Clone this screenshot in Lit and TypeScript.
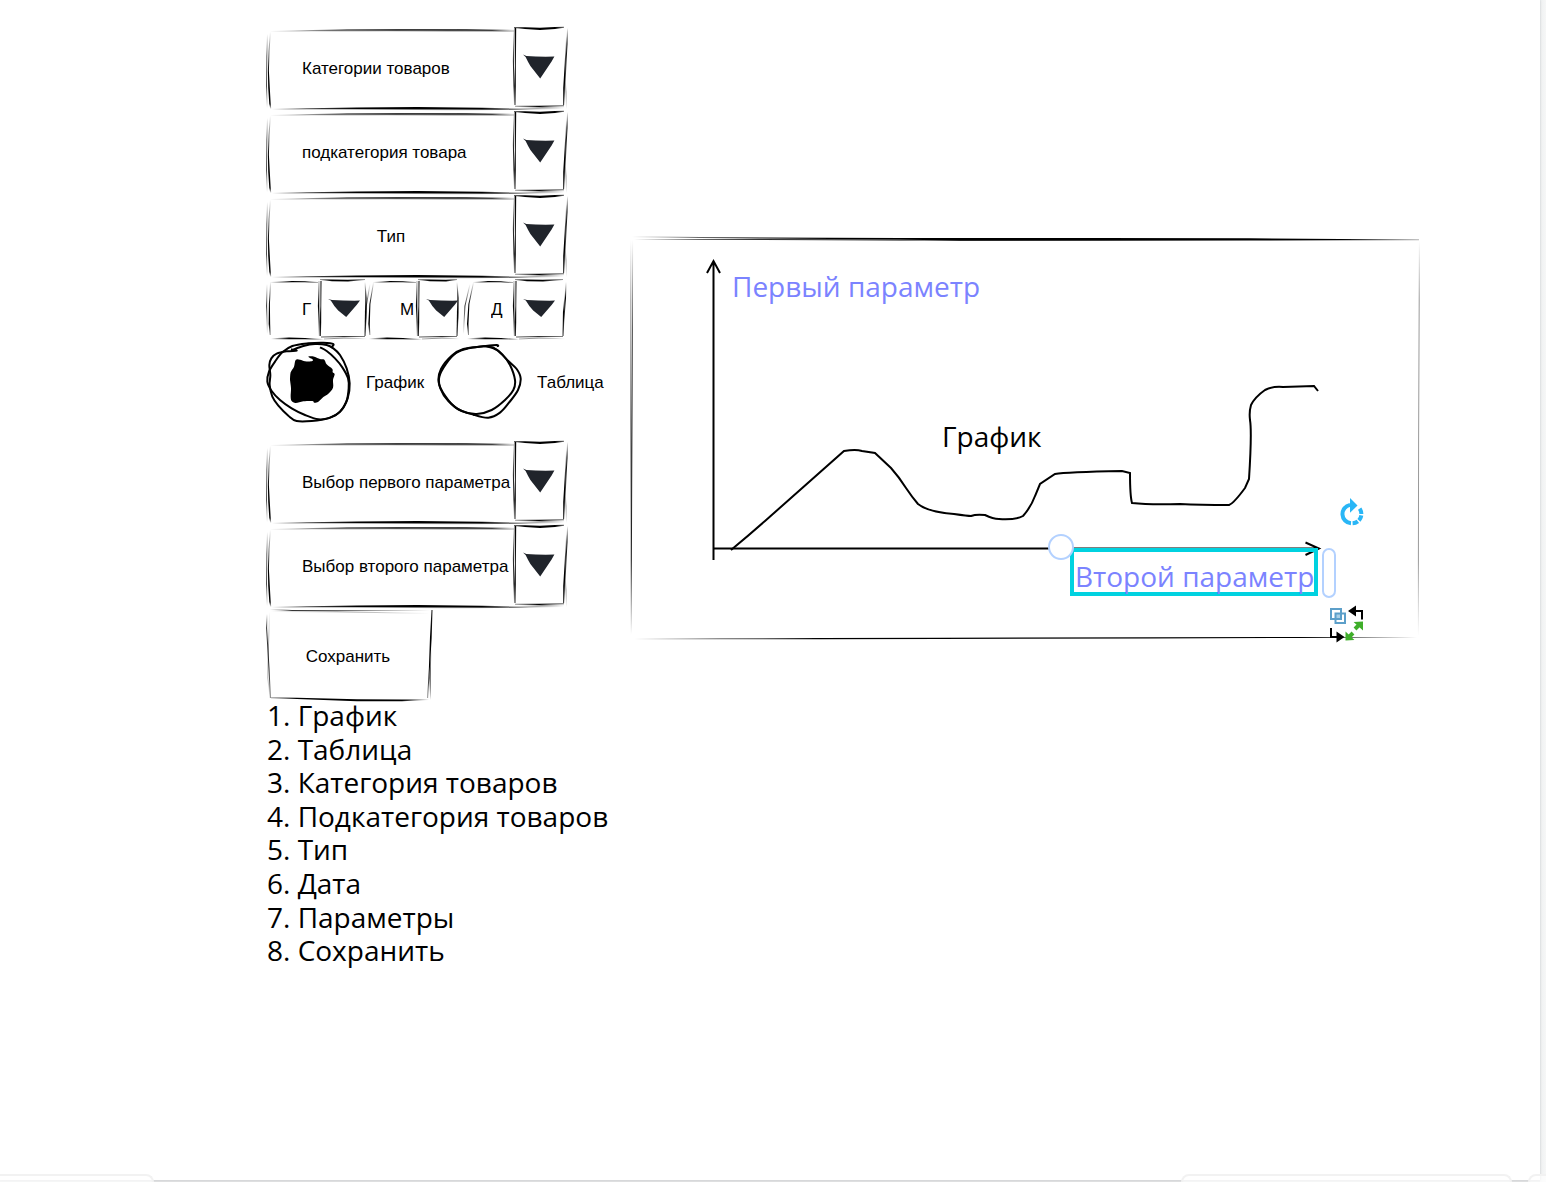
import { LitElement, html, css, svg, nothing } from "lit";
import { customElement, property } from "lit/decorators.js";

type Pt = [x: number, y: number, w: number];

let inkCount = 0;

/**
 * A pen stroke through the points. The third number of each point is the pen
 * pressure: above 1 the stroke gets thicker, below 1 it fades out.
 */
const pen = (...pts: Pt[]) => {
  const a: string[] = [];
  const b: string[] = [];
  pts.forEach(([x, y, pressure], i) => {
    const w = Math.max(pressure, 1);
    const p = pts[Math.max(0, i - 1)];
    const n = pts[Math.min(pts.length - 1, i + 1)];
    const dx = n[0] - p[0];
    const dy = n[1] - p[1];
    const len = Math.hypot(dx, dy) || 1;
    const ox = (-dy / len) * (w / 2);
    const oy = (dx / len) * (w / 2);
    a.push(`${(x + ox).toFixed(2)},${(y + oy).toFixed(2)}`);
    b.unshift(`${(x - ox).toFixed(2)},${(y - oy).toFixed(2)}`);
  });
  const [x1, y1] = pts[0];
  const [x2, y2] = pts[pts.length - 1];
  const span = (x2 - x1) ** 2 + (y2 - y1) ** 2;
  const id = `ink-${inkCount++}`;
  const stops = pts.map(([x, y, pressure]) => {
    const t = ((x - x1) * (x2 - x1) + (y - y1) * (y2 - y1)) / span;
    const alpha = pressure <= 0.2 ? 0 : Math.min(1, pressure);
    return svg`<stop offset=${t.toFixed(3)} stop-opacity=${alpha} />`;
  });
  return svg`
    <linearGradient id=${id} gradientUnits="userSpaceOnUse" x1=${x1} y1=${y1} x2=${x2} y2=${y2}>${stops}</linearGradient>
    <polygon fill=${`url(#${id})`} points=${a.concat(b).join(" ")} />`;
};

/** Path data of a smooth curve through a flat list of x, y coordinates. */
const smooth = (...c: number[]) => {
  const count = c.length / 2;
  const at = (i: number) => {
    const k = Math.min(count - 1, Math.max(0, i)) * 2;
    return [c[k], c[k + 1]];
  };
  let d = `M${c[0]} ${c[1]}`;
  for (let i = 0; i < count - 1; i++) {
    const [p0, p1, p2, p3] = [at(i - 1), at(i), at(i + 1), at(i + 2)];
    const c1 = [p1[0] + (p2[0] - p0[0]) / 6, p1[1] + (p2[1] - p0[1]) / 6];
    const c2 = [p2[0] - (p3[0] - p1[0]) / 6, p2[1] - (p3[1] - p1[1]) / 6];
    d += `C${[...c1, ...c2, ...p2].map((v) => v.toFixed(1)).join(" ")}`;
  }
  return d;
};

const largeFrame = () => svg`
  ${pen([3, 5.4, 0.1], [45, 4.6, 0.4], [80, 4, 1.2], [130, 3.8, 1.3], [200, 3.6, 0.7], [247, 3.6, 0.1])}
  ${pen([20, 5.4, 0.1], [120, 4.8, 0.4], [180, 4.8, 0.9], [225, 4.8, 1], [247, 5, 0.3])}
  ${pen([0.5, 8, 0.1], [-0.2, 30, 0.6], [-0.5, 60, 0.7], [0.2, 82, 0.1])}
  ${pen([3.4, 6, 0.1], [2, 25, 0.5], [1.4, 45, 1], [2, 62, 1.6], [3, 78, 1.4], [3.8, 83, 0.2])}
  ${pen([5, 83.2, 0.1], [40, 82.8, 0.7], [90, 82.4, 1.8], [150, 82.2, 2.4], [215, 82.6, 1.7], [262, 83.2, 0.1])}
  ${pen([150, 84, 0.1], [230, 83.6, 0.5], [270, 82.8, 0.4], [297, 82.4, 0.1])}
  ${pen([246.8, 2, 0.2], [246.4, 35, 0.9], [246.8, 60, 0.7], [247.4, 79, 0.1])}
  ${pen([248.4, 2, 1.6], [248.4, 40, 0.9], [248, 60, 1.6], [248, 79, 0.8])}
  ${pen([247, 1.6, 0.6], [258, 2.2, 1.8], [273, 2.8, 2.2], [288, 2, 1.9], [297, 1.2, 0.6])}
  ${pen([300.6, 2, 0.1], [300, 18, 1], [298.6, 45, 0.7], [297, 78, 0.2])}
  ${pen([299.6, 10, 0.2], [298, 42, 1.1], [297, 62, 1.6], [296.6, 79, 0.8])}
  ${pen([298, 50, 0.2], [299, 66, 0.4], [299.6, 83, 0.1])}
  ${pen([248, 80.2, 0.4], [272, 80.4, 1.3], [297, 79.8, 0.6])}
  ${pen([252, 82, 0.2], [275, 81.4, 0.4], [298, 81.4, 0.1])}
  <path class="mark" d="M256 28.6 l3.4 1.4 Q272 31 287.4 30.6 L284.6 35.4 L273.2 52.4 L263.4 40 Q261 36 258.6 31Z" />`;

const smallFrame = (mid: number, end: number, slant: number, lean: number) => svg`
  ${pen([slant + 3, 4.4, 0.1], [25, 3.6, 1.3], [38, 3.8, 1], [mid - 2, 4.6, 0.3])}
  ${pen([slant, 6, 0.1], [slant / 3 - 0.4, 28, 0.8], [0.4, 56, 0.1])}
  ${pen([slant + 3.6, 4, 0.1], [slant / 2 + 2.4, 26, 1], [slant / 3 + 2.4, 46, 1.5], [slant / 3 + 3.2, 57, 0.4])}
  ${pen([4, 60.8, 0.1], [22, 60.4, 1.6], [38, 60.6, 1.4], [mid + 4, 61.4, 0.1])}
  ${pen([mid - 1, 3, 0.3], [mid - 1.4, 28, 1.4], [mid - 0.6, 58, 0.4])}
  ${pen([mid + 1, 3, 1], [mid + 0.8, 28, 0.8], [mid + 0.4, 44, 1.6], [mid + 0.4, 58, 0.8])}
  ${pen([mid, 1.6, 0.4], [mid + 12, 2.4, 1.7], [mid + 28, 2.6, 1.9], [end - 2, 1.4, 0.4])}
  ${pen([end + lean, 4, 0.1], [end + lean / 2, 20, 1], [end - 1, 40, 0.7], [end - 2, 57, 0.2])}
  ${pen([end + lean / 2, 12, 0.1], [end - 1.4, 34, 1.3], [end - 2, 58, 0.8])}
  ${pen([mid + 1, 59, 0.6], [mid + 24, 58.4, 0.8], [end - 2, 58.6, 0.5])}
  ${pen([mid + 4, 61, 0.3], [mid + 24, 60, 0.5], [end, 60.8, 0.1])}
  <path class="mark" d=${`M${mid + 8} 21 l4 1 q14 .8 28 .6 l-3.4 4.4 l-10.4 12 l-8 -6.6 q-4 -4 -7.4 -10z`} />`;

@customElement("sketch-select")
export class SketchSelect extends LitElement {
  @property() label = "";
  @property({ type: Boolean }) centered = false;

  static styles = css`
    :host {
      display: block;
    }
    .field {
      position: relative;
      display: flex;
      height: 84px;
    }
    .frame {
      position: absolute;
      inset: 0;
      width: 100%;
      height: 100%;
      overflow: visible;
      pointer-events: none;
    }
    .mark {
      fill: #20242b;
    }
    .select {
      appearance: none;
      flex: 1;
      min-width: 0;
      margin: 0;
      border: 0;
      padding: 2px 52px 0 35px;
      background: none;
      color: #000;
      font: 17px/20px "Liberation Sans", Arial, sans-serif;
    }
    .centered {
      padding-left: 0;
      text-align: center;
      text-align-last: center;
    }
  `;

  render() {
    return html`<div class="field">
      <select class="select ${this.centered ? "centered" : ""}" aria-label=${this.label}>
        <option>${this.label}</option>
      </select>
      <svg class="frame" viewBox="0 0 300 84" preserveAspectRatio="none" aria-hidden="true">${largeFrame()}</svg>
    </div>`;
  }
}

const dateFrames: Record<string, unknown> = {
  Год: smallFrame(53, 100, 0, -2),
  Месяц: smallFrame(53, 94, 5, -2),
  День: smallFrame(52, 102, 7, 1),
};

@customElement("sketch-date-part")
export class SketchDatePart extends LitElement {
  @property() label = "";
  @property() name = "";

  static styles = css`
    :host {
      display: block;
    }
    .field {
      position: relative;
      display: flex;
      height: 62px;
    }
    .frame {
      position: absolute;
      inset: 0;
      width: 100%;
      height: 100%;
      overflow: visible;
      pointer-events: none;
    }
    .mark {
      fill: #20242b;
    }
    .select {
      appearance: none;
      flex: 1;
      min-width: 0;
      margin: 0;
      border: 0;
      padding: 2px 0 0 35px;
      background: none;
      color: #000;
      font: 17px/20px "Liberation Sans", Arial, sans-serif;
    }
    .day {
      padding-left: 28px;
    }
  `;

  render() {
    return html`<div class="field">
      <select class="select ${this.name === "День" ? "day" : ""}" aria-label=${this.name}>
        <option>${this.label}</option>
      </select>
      <svg class="frame" viewBox="0 0 98 62" aria-hidden="true">${dateFrames[this.name]}</svg>
    </div>`;
  }
}

const ringOne = svg`
  <path class="ink" d=${smooth(195, 247, 215, 258, 240, 280, 262, 307, 279, 340, 281, 370, 274, 410, 255, 440, 225, 458, 190, 463, 150, 450, 110, 430, 75, 405, 50, 378, 37, 350, 42, 320, 60, 290, 82, 262, 112, 243, 160, 235, 205, 233, 235, 237, 228, 248)} />
  <path class="ink" d=${smooth(108, 253, 125, 257, 95, 259, 65, 266, 49, 280, 43, 300, 46, 330, 44, 360, 52, 395, 70, 422, 100, 452, 125, 468, 170, 468, 220, 460, 255, 440, 278, 400, 284, 355, 275, 310, 255, 270, 235, 250, 215, 240, 180, 237, 145, 243, 112, 255)} />`;
const blob = svg`
  <path d=${smooth(105, 345, 107, 322, 117, 305, 122, 285, 135, 284, 150, 289, 168, 289, 174, 284, 160, 275, 178, 275, 195, 282, 208, 284, 215, 298, 232, 312, 233, 322, 239, 328, 234, 345, 234, 368, 220, 386, 205, 396, 190, 410, 178, 413, 172, 408, 145, 409, 122, 414, 110, 408, 107, 395, 108, 370, 105, 345)} />`;
const ringTwo = svg`
  <path class="ink" d=${smooth(728, 246, 726, 240, 685, 244, 640, 250, 603, 264, 572, 298, 553, 335, 556, 370, 580, 408, 620, 438, 665, 447, 710, 435, 750, 405, 775, 375, 780, 345, 765, 300, 742, 268, 715, 248, 690, 243)} />
  <path class="ink" d=${smooth(690, 243, 725, 255, 760, 288, 785, 312, 797, 340, 789, 375, 762, 413, 735, 443, 700, 458, 655, 449, 605, 430, 572, 395, 551, 352, 558, 312, 590, 272, 625, 252, 690, 243)} />`;

@customElement("sketch-chart")
export class SketchChart extends LitElement {
  static styles = css`
    :host {
      display: block;
    }
    .chart {
      display: block;
      width: 100%;
      height: auto;
      overflow: visible;
    }
    .line {
      fill: none;
      stroke: #000;
      stroke-width: 2;
    }
    .text {
      font: 28px "Open Sans", "Noto Sans", sans-serif;
    }
    .parameter {
      fill: #7b83ff;
    }
    .selection {
      fill: none;
      stroke: #00d2e0;
      stroke-width: 4;
    }
    .handle {
      fill: #fff;
      stroke: #b3d1ff;
      stroke-width: 2;
    }
    .rotate {
      fill: none;
      stroke: #29b6f6;
      stroke-width: 4;
    }
    .rotate-head {
      fill: #29b6f6;
    }
    .copy {
      fill: none;
      stroke: #5c9fc9;
      stroke-width: 2;
    }
    .overlap {
      fill: #a9cfe6;
    }
    .resize {
      fill: #3fae2a;
    }
    .resize-line {
      stroke: #3fae2a;
      stroke-width: 4;
    }
  `;

  render() {
    return html`<svg class="chart" viewBox="631 238 788 400" role="img" aria-label="График">
      ${pen([632, 236.8, 0.1], [700, 237.5, 0.6], [760, 238, 1], [900, 238.8, 1.6], [960, 239.4, 2.8], [1100, 239.4, 2.8], [1250, 239.4, 2.4], [1340, 239.6, 1.2], [1419, 239.8, 0.3])}
      ${pen([634, 239.4, 0.1], [700, 239.5, 0.6], [760, 239.6, 0.8], [900, 240, 1], [1100, 239.6, 1])}
      ${pen([630.8, 240, 0.1], [630.8, 300, 0.4], [630.8, 420, 0.6], [630.8, 636, 0.1])}
      ${pen([632.6, 240, 0.1], [632.4, 330, 0.7], [631.8, 450, 1], [631.4, 560, 0.8], [631.4, 634, 0.1])}
      ${pen([1419.4, 240, 0.1], [1419.2, 300, 0.4], [1418.6, 440, 0.4], [1418.4, 560, 0.4], [1418.4, 636, 0.1])}
      ${pen([634, 639, 0.1], [720, 638.8, 0.6], [820, 638.6, 1.2], [940, 638.3, 1.2], [1150, 637.8, 1.3], [1300, 637.4, 1], [1417, 637.4, 0.1])}

      <path class="line" d="M713.5 560 V261 M707 273 L713.5 261 L720 273" />
      <path class="line" d="M713.5 548.5 H1319 M1305.5 542.5 L1319 548.5 L1305.5 555" />
      <path class="line" d="M731 550 Q748 536 765 521 L844 451 Q856 449 862 451 L875 453 L891 468 Q899 477 906 488 Q912 497 918 504 Q928 512 954 514 Q968 516 971 516 Q976 514 985 515 Q993 519 999 519 Q1016 520 1023 516 Q1031 507 1035 496 L1040 484 L1055 474 Q1066 472 1122 471 L1130 473 Q1130 496 1132 503 Q1150 505 1180 504 Q1200 505 1229 505 Q1234 503 1245 488 L1249 479 Q1252 432 1250 420 Q1249 412 1251 405 Q1255 397 1265 390 Q1273 386 1283 387 L1314 386 L1318 391" />

      <text class="text parameter" x="732" y="297">Первый параметр</text>
      <text class="text" x="942" y="447">График</text>
      <rect class="selection" x="1072" y="550" width="244" height="44" />
      <text class="text parameter" x="1075" y="587">Второй параметр</text>

      <circle class="handle" cx="1061" cy="547" r="12" />
      <rect class="handle" x="1323" y="549" width="12" height="48" rx="6" />

      <path class="rotate" d="M1350 504.9 A9.3 9.3 0 0 0 1351 523.3" />
      <path class="rotate" stroke-dasharray="5.6 1.4" d="M1352.6 523.3 A9.3 9.3 0 0 0 1359.5 508.4" />
      <path class="rotate-head" d="M1350 498 L1357.5 505.5 L1350 512.8Z" />

      <path class="overlap" d="M1335 613 h6 v6 h-6z" />
      <path class="copy" d="M1331 609 h10 v10 h-10z M1335.5 613.5 h9.5 v9.5 h-9.5z" />
      <path class="line" d="M1355 611 H1362 V619.5 M1331 628 V637 H1338" />
      <path d="M1348 611 L1356 605.6 V616.4Z M1344.5 637 L1336.5 631.6 V642.4Z" />
      <path class="resize-line" d="M1355 629 L1360 624 M1348 638 L1353 633" />
      <path class="resize" d="M1363 621.5 V630.5 L1353.6 622Z M1345.5 640.5 V631.5 L1354.4 640Z" />
    </svg>`;
  }
}

@customElement("app-root")
export class AppRoot extends LitElement {
  static styles = css`
    :host {
      display: block;
      color: #000;
      font: 17px/20px "Liberation Sans", Arial, sans-serif;
    }
    .page {
      position: relative;
      box-sizing: border-box;
      display: flex;
      min-height: 100vh;
      padding: 0 6px 2px 0;
      overflow: hidden;
      background: linear-gradient(90deg, #eef0f1, #f6f7f7) right / 6px 100% no-repeat, #e0e1e2;
    }
    .sheet {
      flex: 1;
      display: grid;
      grid-template-columns: 364px minmax(0, 1fr);
      align-items: start;
      box-sizing: border-box;
      padding: 26px 121px 40px 267px;
      background: #fff;
      box-shadow: 0 0 2px #c4c8ca;
    }
    .form {
      display: flex;
      flex-direction: column;
      align-items: flex-start;
    }
    .field {
      width: 300px;
    }
    .date {
      display: grid;
      grid-template-columns: repeat(3, 98px);
      height: 62px;
    }
    .views {
      display: flex;
      box-sizing: border-box;
      height: 100px;
      padding-top: 4px;
      white-space: nowrap;
    }
    .view {
      display: flex;
      align-items: flex-start;
      gap: 16px;
      margin-right: 14px;
    }
    .caption {
      padding-top: 29px;
    }
    .choice {
      position: relative;
      width: 83px;
      height: 80px;
    }
    .radio {
      appearance: none;
      position: absolute;
      inset: 0;
      margin: 0;
    }
    .ring {
      position: absolute;
      inset: 0;
      width: 83px;
      height: 80px;
      overflow: visible;
      pointer-events: none;
    }
    .ink {
      fill: none;
      stroke: #000;
      stroke-width: 6;
      stroke-linejoin: round;
    }
    .save {
      position: relative;
      width: 164px;
      height: 94px;
      padding: 4px 2px 0 0;
      border: 0;
      background: none;
      color: inherit;
      font: inherit;
    }
    .save-frame {
      position: absolute;
      inset: 0;
      overflow: visible;
      pointer-events: none;
    }
    .legend {
      margin: -3px 0 0;
      padding: 0;
      list-style-position: inside;
      font: 28px/1.2 "Open Sans", "Noto Sans", sans-serif;
      white-space: nowrap;
    }
    .chart {
      margin-top: 212px;
    }
    .dock {
      position: absolute;
      bottom: 0;
      box-sizing: border-box;
      height: 8px;
      border: 2px solid #f2f2f2;
      border-bottom: 0;
      border-radius: 8px 8px 0 0;
      background: rgba(255, 255, 255, 0.7);
    }
    .dock-left {
      left: -10px;
      width: 164px;
    }
    .dock-center {
      right: 34px;
      width: 331px;
    }
    .dock-right {
      right: -20px;
      width: 38px;
    }
  `;

  private legend = [
    "График",
    "Таблица",
    "Категория товаров",
    "Подкатегория товаров",
    "Тип",
    "Дата",
    "Параметры",
    "Сохранить",
  ];

  private view(label: string, ring: unknown, box: string, checked: boolean) {
    return html`<label class="view">
      <span class="choice">
        <input class="radio" type="radio" name="view" .checked=${checked} />
        <svg class="ring" viewBox=${box} aria-hidden="true">${ring}${checked ? blob : nothing}</svg>
      </span>
      <span class="caption">${label}</span>
    </label>`;
  }

  render() {
    return html`<div class="page">
      <main class="sheet">
        <form class="form">
          <sketch-select class="field" label="Категории товаров"></sketch-select>
          <sketch-select class="field" label="подкатегория товара"></sketch-select>
          <sketch-select class="field" label="Тип" centered></sketch-select>
          <div class="date">
            <sketch-date-part label="Г" name="Год"></sketch-date-part>
            <sketch-date-part label="М" name="Месяц"></sketch-date-part>
            <sketch-date-part label="Д" name="День"></sketch-date-part>
          </div>
          <div class="views">
            ${this.view("График", ringOne, "36 237 249 240", true)}
            ${this.view("Таблица", ringTwo, "549 237 249 240", false)}
          </div>
          <sketch-select class="field" label="Выбор первого параметра"></sketch-select>
          <sketch-select class="field" label="Выбор второго параметра"></sketch-select>
          <button class="save" type="button">
            <svg class="save-frame" width="164" height="94" viewBox="0 0 164 94" aria-hidden="true">
              ${pen([3, 1.6, 0.2], [25, 2.4, 0.8], [90, 2.6, 0.5], [163, 2.6, 0.2])}
              ${pen([4, 3.4, 0.2], [70, 3.8, 0.4], [162, 5.4, 0.2])}
              ${pen([0, 6, 0.1], [-0.4, 20, 0.8], [2, 60, 0.8], [3.4, 90, 0.5])}
              ${pen([2.6, 4, 0.1], [1.4, 40, 0.4], [0.8, 70, 0.3], [2.8, 88, 0.1])}
              ${pen([4, 89.8, 0.4], [30, 90.4, 1.2], [90, 92.2, 1.9], [135, 92.4, 1.8], [162, 91.6, 0.2])}
              ${pen([165, 2, 0.9], [163.8, 30, 1.7], [162.4, 60, 1], [160.6, 90, 0.4])}
              ${pen([164, 40, 0.1], [163, 70, 1], [163.6, 92, 0.2])}
            </svg>
            Сохранить
          </button>
          <ol class="legend">
            ${this.legend.map((item) => html`<li>${item}</li>`)}
          </ol>
        </form>
        <sketch-chart class="chart"></sketch-chart>
      </main>
      <div class="dock dock-left"></div>
      <div class="dock dock-center"></div>
      <div class="dock dock-right"></div>
    </div>`;
  }
}
